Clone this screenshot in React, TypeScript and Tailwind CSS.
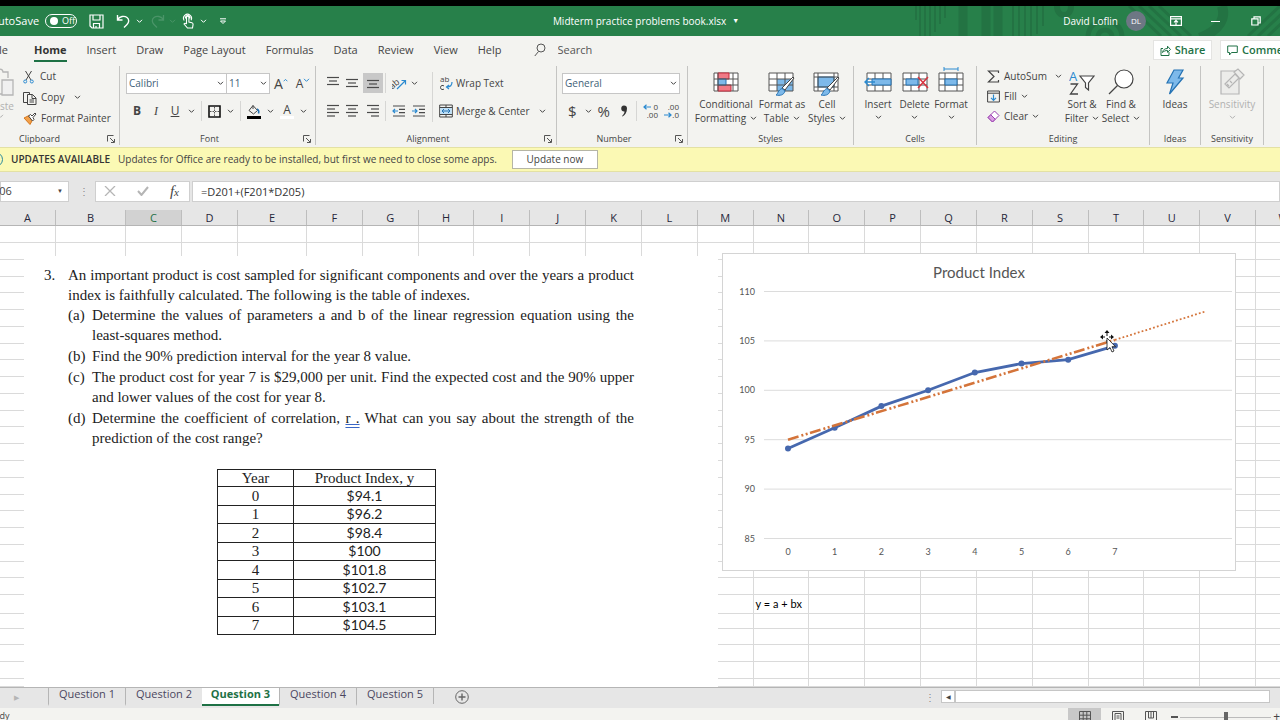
import type { ReactNode } from "react"
import clsx from "clsx"

const tabs = ["Home", "Insert", "Draw", "Page Layout", "Formulas", "Data", "Review", "View", "Help"]
const columns = "ABCDEFGHIJKLMNOPQRSTUVW".split("")
const sheets = ["Question 1", "Question 2", "Question 3", "Question 4", "Question 5"]
const productIndex = [94.1, 96.2, 98.4, 100, 101.8, 102.7, 103.1, 104.5]

// the last column runs past the right edge of the window
const columnGrid =
  "grid w-[calc(100%+32px)] grid-cols-[56px_70px_56px_56px_69px_repeat(17,minmax(0,1fr))_56px]"

/* ---------- small pieces ---------- */

function Chevron({ className }: { className?: string }) {
  return (
    <svg viewBox="0 0 8 6" className={clsx("h-[5px] w-[7px] shrink-0", className)} fill="none" stroke="currentColor" strokeWidth="1.2">
      <path d="M1 1l3 3 3-3" />
    </svg>
  )
}

function Divider() {
  return <span className="ml-1.5 h-5 w-px bg-[#d6d6d4]" />
}

function Group({
  label,
  className,
  inner,
  launcher,
  children,
}: {
  label: string
  className: string
  inner?: string
  launcher?: boolean
  children: ReactNode
}) {
  return (
    <section
      aria-label={label}
      className={clsx("flex shrink-0 flex-col border-r border-[#c4c4c2]", className)}
    >
      <div className={clsx("flex h-[67px] items-start", inner)}>{children}</div>
      <div className="flex h-3 items-center">
        <span className="flex-1 text-center text-[9px] leading-3 whitespace-nowrap">{label}</span>
        {launcher && (
          <button aria-label={`${label} settings`} className="w-4 pl-1">
            <svg viewBox="0 0 8 8" className="size-2" fill="none" stroke="#555" strokeWidth="1">
              <path d="M.5 6.500V.5h6M3 3l4 4M7.500 4v3.500H4" />
            </svg>
          </button>
        )}
      </div>
    </section>
  )
}

function SelectBox({ label, value, className }: { label: string; value: string; className: string }) {
  return (
    <div className={clsx("grid h-[21px] items-center border border-[#c6c6c6] bg-white", className)}>
      <select
        aria-label={label}
        className="col-start-1 row-start-1 h-full w-full appearance-none px-0.5 text-[10px] text-[#3f5f78] outline-none"
      >
        <option>{value}</option>
      </select>
      <Chevron className="pointer-events-none col-start-1 row-start-1 mr-0.5 justify-self-end" />
    </div>
  )
}

function Lines({ widths, align = "start" }: { widths: number[]; align?: "start" | "middle" | "end" }) {
  return (
    <svg viewBox="0 0 14 14" className="size-3.5" stroke="#4a4a4a" strokeWidth="1.2">
      {widths.map((w, i) => {
        const x = align === "start" ? 1 : align === "middle" ? 7 - w / 2 : 13 - w
        return <path key={i} d={`M${x} ${1.5 + i * 3.5}h${w}`} />
      })}
    </svg>
  )
}

function Indent({ flip }: { flip?: boolean }) {
  return (
    <svg viewBox="0 0 14 14" className="size-3.5" fill="none">
      <path d="M1 2h12M7 5.300h6M7 8.600h6M1 12h12" stroke="#4a4a4a" strokeWidth="1.2" />
      <path d={flip ? "M0 7h5M3 5l2 2-2 2" : "M1 7h5M3 5L1 7l2 2"} stroke="#2b8ad0" strokeWidth="1.2" />
    </svg>
  )
}

function Brush() {
  return (
    <g>
      <path d="M26 6L17 18l-3-2L25 5z" fill="#fff" stroke="#444" strokeWidth="1" />
      <path d="M14 16.500l3 2.500c-1 4-5 5-9 4 2-1 2-5 6-6.500z" fill="#7db9ea" stroke="#2472b3" strokeWidth="1" />
    </g>
  )
}

function BigButton({
  icon,
  lines,
  chevron,
  muted,
  className,
}: {
  icon: ReactNode
  lines: string[]
  chevron?: "inline" | "below"
  muted?: boolean
  className?: string
}) {
  return (
    <button className={clsx("flex flex-col items-center pt-0.5 text-[10px] leading-3.5", muted && "text-[#b1b1b1]", className)}>
      <span className="mb-px flex h-7 items-center justify-center">{icon}</span>
      {lines.map((line, i) => (
        <span key={line} className="flex items-center gap-1 whitespace-nowrap">
          {line}
          {chevron === "inline" && i === lines.length - 1 && <Chevron />}
        </span>
      ))}
      {chevron === "below" && <Chevron className="mt-1" />}
    </button>
  )
}

/* ---------- title bar ---------- */

function TitleBar() {
  return (
    <header className="relative flex h-[30px] shrink-0 items-center overflow-hidden bg-[#27804a] text-[11px] text-white">
      <svg viewBox="0 0 366 30" className="absolute right-0 h-[30px] w-[366px]" fill="none" stroke="#237343">
        <path d="M2 0v14M6 0v30M11 0v30M16 0v30M21 0v26M26 0v18M31 0v12" strokeWidth="2" />
        <path d="M49 0v30M72 0v30M84 0v30" strokeWidth="9" />
        <path d="M99 0v30M105 0v30M111 0v30M117 0v30M123 0v28M129 0v20" strokeWidth="2" />
        <path d="M143 0c0 12 14 12 14 0" strokeWidth="6" />
        <circle cx="191" cy="31" r="7" strokeWidth="5" />
        <circle cx="191" cy="31" r="17" strokeWidth="5" />
        <path d="M215 0l32 30M225 0l32 30M235 0l32 30M245 0l32 30" strokeWidth="3" />
        <path d="M308 0c4 12-2 24-22 32" strokeWidth="10" />
        <path d="M334 30l32-30M344 30l32-30M354 30l32-30" strokeWidth="3" />
      </svg>

      <div className="relative flex items-center">
        <label htmlFor="autosave" className="-ml-[9px] w-12">AutoSave</label>
        <button id="autosave" role="switch" aria-checked="false" className="ml-1.5 flex h-3.5 w-8 items-center gap-1 rounded-full border border-white pl-1 text-[9px]">
          <span className="size-2 rounded-full bg-white" />
          Off
        </button>
        <button aria-label="Save" className="ml-3">
          <svg viewBox="0 0 15 15" className="size-[15px]" fill="none" stroke="#fff" strokeWidth="1.2">
            <path d="M1 1h13v13H3l-2-2zM4 1v5h7V1M4.500 14V9.500h6V14M7 14v-2" />
          </svg>
        </button>
        <button aria-label="Undo" className="ml-3 flex items-center gap-1.5">
          <svg viewBox="0 0 14 14" className="size-3.5" fill="none" stroke="#fff" strokeWidth="1.4">
            <path d="M1.500 1v5h5M1.500 6c2-4 7-4.500 9.500-2.500s2 5 0 7L8 13.500" />
          </svg>
          <Chevron />
        </button>
        <button aria-label="Redo" className="ml-2 flex items-center gap-1 text-[#4a9468]">
          <svg viewBox="0 0 14 14" className="size-3.5" fill="none" stroke="currentColor" strokeWidth="1.3">
            <path d="M12.500 1v5h-5M12.500 6c-2-4-7-4.500-9.500-2.500s-2 5 0 7L6 13.500" />
          </svg>
          <Chevron />
        </button>
        <button aria-label="Touch mode" className="ml-1.5 flex items-center gap-1.5">
          <svg viewBox="0 0 12 16" className="h-4 w-3" fill="none" stroke="#fff" strokeWidth="1.1">
            <path d="M4.500 11V4.500a1.200 1.200 0 012.400 0V9l3 .8c1 .3 1.300 1 1.100 2L10.500 15H5.500L2 11c.5-1 1.500-1 2.500 0M2.200 7.500A4 4 0 119 7.200M3.500 5.500a2.300 2.300 0 114.400 0" />
          </svg>
          <Chevron />
        </button>
        <button aria-label="Customize toolbar" className="ml-3">
          <svg viewBox="0 0 8 7" className="h-[7px] w-2" fill="none" stroke="#fff">
            <path d="M1 .8h6M1.500 3L4 5.500 6.500 3z" />
          </svg>
        </button>
      </div>

      <h1 className="absolute inset-x-0 flex items-center justify-center gap-1.5 pl-3 text-[10px]">
        Midterm practice problems book.xlsx
        <span className="text-[7px]">▼</span>
      </h1>

      <div className="relative ml-auto flex items-center">
        <span className="text-[10px]">David Loflin</span>
        <span className="ml-2 flex size-5 items-center justify-center rounded-full bg-[#6d7784] text-[8px]">DL</span>
        <button aria-label="Ribbon display options" className="ml-6">
          <svg viewBox="0 0 12 10" className="h-2.5 w-3" fill="none" stroke="#fff" strokeWidth="1.2">
            <path d="M.6.6h10.800v8.800H.6zM.6 2.800h10.800M6 9V4.500M4 6.300l2-2 2 2" />
          </svg>
        </button>
        <button aria-label="Minimize" className="ml-[29px] flex h-3 w-[9px] items-center">
          <span className="h-px w-full bg-white" />
        </button>
        <button aria-label="Restore" className="mr-[19px] ml-[31px]">
          <svg viewBox="0 0 10 10" className="size-2.5" fill="none" stroke="#fff" strokeWidth="1.2">
            <path d="M.8 2.800h6.200V9H.8zM3 2.500V.8h6.200V7H7.200" />
          </svg>
        </button>
      </div>
    </header>
  )
}

function TabRow() {
  return (
    <nav className="flex h-[30px] shrink-0 items-center overflow-hidden bg-[#f3f3f0] pb-0.5 text-[11px] leading-4">
      <button className="-ml-3 w-5 text-right">File</button>
      <div className="ml-[26px] flex gap-5">
        {tabs.map((tab) => (
          <button
            key={tab}
            className={clsx(
              "border-b-2 pt-1 pb-0.5",
              tab === "Home" ? "border-[#1e7145] font-bold text-[#333]" : "border-transparent"
            )}
          >
            {tab}
          </button>
        ))}
      </div>
      <label className="ml-8 flex items-center gap-3">
        <svg viewBox="0 0 12 14" className="h-3.5 w-3" fill="none" stroke="#555">
          <circle cx="7" cy="5" r="4" />
          <path d="M4.500 8.500L.8 13" />
        </svg>
        <input aria-label="Search" className="w-24 outline-none placeholder:text-[#555]" placeholder="Search" />
      </label>
      <button className="ml-auto flex h-5 w-[59px] items-center justify-center gap-1 border border-[#e4e4e2] bg-white font-semibold text-[#1e7145]">
        <svg viewBox="0 0 11 11" className="size-[11px]" fill="none" stroke="#1e7145">
          <path d="M3 3.500H1v7h8V7M2.500 7.500c.5-3 2.500-4 5-4V1.200L10.500 4.500 7.500 7.300V5.500c-2 0-3.500.5-5 2z" />
        </svg>
        Share
      </button>
      <button className="-mr-7 ml-2 flex h-5 w-[88px] items-center gap-1 border border-[#e4e4e2] bg-white pl-1.5 font-semibold text-[#1e7145]">
        <svg viewBox="0 0 11 11" className="size-[11px]" fill="none" stroke="#1e7145">
          <path d="M.7 1h9.600v6.500H4.500L2.500 10V7.500H.7z" />
        </svg>
        Comments
      </button>
    </nav>
  )
}

/* ---------- ribbon ---------- */

function ClipboardGroup() {
  return (
    <Group label="Clipboard" launcher className="-ml-6 w-36">
      <button aria-label="Paste" className="flex w-[38px] flex-col items-end pt-0.5 text-[10px] leading-4 text-[#b1b1b1]">
        <svg viewBox="0 0 26 30" className="h-[30px] w-[26px]" fill="none" stroke="#b5b5b5" strokeWidth="1.300">
          <path d="M14 26H2V4h5c0-4 8-4 8 0h5v6" />
          <path d="M14 12h11v15H14z" fill="#f0f0f0" />
        </svg>
        Paste
        <Chevron className="mr-2.5" />
      </button>
      <div className="flex flex-col pl-[9px] text-[10px]">
        <button className="flex h-[21px] items-center gap-1.5">
          <svg viewBox="0 0 11 14" className="h-3.5 w-[11px]" fill="none" stroke="#444">
            <path d="M2.500 1l5.500 9M8.500 1L3 10" />
            <circle cx="2.200" cy="11.500" r="1.500" stroke="#2b8ad0" />
            <circle cx="8.800" cy="11.500" r="1.500" stroke="#2b8ad0" />
          </svg>
          Cut
        </button>
        <button className="flex h-[21px] items-center gap-1">
          <svg viewBox="0 0 14 14" className="size-3.5" fill="none" stroke="#444">
            <path d="M4.500 11.500H.5V1.500h6v2M4.500 3.500h5l3.500 3.500v6.500H4.500zM9 3.500v4h4M6.500 9h4.500M6.500 11h4.500" />
          </svg>
          Copy
          <Chevron className="ml-1.5" />
        </button>
        <button className="flex h-[21px] items-center gap-1 whitespace-nowrap">
          <svg viewBox="0 0 14 14" className="size-3.5" fill="none" stroke="#444">
            <path d="M1 6l5-2.500L9.500 8 7 12.500z" fill="#f2a04a" stroke="#d5761c" />
            <path d="M5.500 4l2-1.500 1.500 1.500 3-3 1 1-3 3.500L11 7.500 9.500 9z" fill="#fff" />
          </svg>
          Format Painter
        </button>
      </div>
    </Group>
  )
}

function FontGroup() {
  return (
    <Group label="Font" launcher className="w-[196px]" inner="pl-1.5">
      <div className="flex flex-col pt-[7px]">
        <div className="flex items-center">
          <SelectBox label="Font name" value="Calibri" className="w-[101px]" />
          <SelectBox label="Font size" value="11" className="-ml-px w-11" />
          <button aria-label="Increase font size" className="ml-1 flex text-[14px] leading-4">
            A
            <svg viewBox="0 0 8 6" className="mt-0.5 h-1 w-[5px]" fill="none" stroke="#2b8ad0" strokeWidth="1.500">
              <path d="M1 5l3-3 3 3" />
            </svg>
          </button>
          <button aria-label="Decrease font size" className="ml-2 flex text-[12px] leading-4">
            A<Chevron className="mt-0.5 h-1 w-[5px] text-[#2b8ad0]" />
          </button>
        </div>
        <div className="mt-[7px] flex h-5 items-center pl-1.5 text-[12px]">
          <button aria-label="Bold" className="w-2.5 font-bold">B</button>
          <button aria-label="Italic" className="ml-2.5 w-2 font-['Liberation_Serif',serif] italic">I</button>
          <button aria-label="Underline" className="ml-2.5 w-2.5 underline">U</button>
          <Chevron className="ml-2" />
          <Divider />
          <button aria-label="Borders" className="ml-1.5 flex items-center gap-1.5">
            <svg viewBox="0 0 13 13" className="size-[13px]" fill="none">
              <path d="M1 1h11v11H1z" stroke="#111" strokeWidth="1.600" />
              <path d="M6.500 2v9M2 6.500h9" stroke="#555" strokeDasharray="1.500 1" />
            </svg>
            <Chevron />
          </button>
          <Divider />
          <button aria-label="Fill color" className="ml-1.5 flex items-center gap-1.5">
            <svg viewBox="0 0 14 15" className="h-[15px] w-3.5" fill="none">
              <path d="M6 1.500l4.500 5-4 3.500L2 6.500zM6 1.500V5" stroke="#444" />
              <path d="M10 5c2 1 2 3 1.500 4.500" stroke="#2472b3" strokeWidth="1.500" />
              <path d="M0 12h14v3H0z" fill="#000" />
            </svg>
            <Chevron />
          </button>
          <button aria-label="Font color" className="ml-1.5 flex items-center gap-1.5">
            <span className="w-3.5 border-b-3 border-white text-center leading-3">A</span>
            <Chevron />
          </button>
        </div>
      </div>
    </Group>
  )
}

function AlignmentGroup() {
  return (
    <Group label="Alignment" launcher className="w-[241px]" inner="pl-2">
      <div className="flex flex-col gap-1.5 pt-1.5">
        <div className="flex h-[22px] items-center">
          <button aria-label="Top align" className="w-[19px] pl-0.5"><Lines widths={[12, 8, 12]} align="middle" /></button>
          <button aria-label="Middle align" className="w-5 pt-1 pl-0.5"><Lines widths={[12, 8, 12]} align="middle" /></button>
          <button aria-label="Bottom align" className="flex size-5 items-end justify-center bg-[#c8c8c8]"><Lines widths={[12, 8, 12]} align="middle" /></button>
          <span className="ml-0.5 h-5 w-px bg-[#d6d6d4]" />
          <button aria-label="Orientation" className="ml-1.5 flex items-center gap-1">
            <svg viewBox="0 0 15 14" className="h-3.5 w-[15px]">
              <text x="-3" y="9" fontSize="9" fill="#444" transform="rotate(-40 5 7)">ab</text>
              <path d="M5 13l8-8M9.500 4.500h4v4" fill="none" stroke="#2b8ad0" strokeWidth="1.200" />
            </svg>
            <Chevron />
          </button>
        </div>
        <div className="flex h-[22px] items-center">
          <button aria-label="Align left" className="w-[19px] pl-0.5"><Lines widths={[12, 8, 12, 8]} /></button>
          <button aria-label="Center" className="w-5 pl-0.5"><Lines widths={[12, 8, 12, 8]} align="middle" /></button>
          <button aria-label="Align right" className="w-5 pl-[3px]"><Lines widths={[12, 8, 12, 8]} align="end" /></button>
          <span className="ml-0.5 h-5 w-px bg-[#d6d6d4]" />
          <button aria-label="Decrease indent" className="ml-1.5"><Indent /></button>
          <button aria-label="Increase indent" className="ml-1.5"><Indent flip /></button>
        </div>
      </div>
      <div className="mt-1.5 ml-1.5 flex flex-col gap-1.5 border-l border-[#d6d6d4] pl-1.5 text-[10px]">
        <button className="flex h-[22px] items-center gap-0.5">
          <svg viewBox="0 0 15 16" className="h-4 w-[15px]">
            <text x="1" y="7" fontSize="8" fill="#444">ab</text>
            <path d="M5 11c-1-1-3.500-.8-3.500 1.500S4 15 5 14" fill="none" stroke="#444" />
            <path d="M13 7c0 4-2 5-5 5M10 10l-2.500 2 2.500 2" fill="none" stroke="#2b8ad0" strokeWidth="1.200" />
          </svg>
          Wrap Text
        </button>
        <button className="flex h-[22px] items-center gap-[3px] whitespace-nowrap">
          <svg viewBox="0 0 14 14" className="size-3.5" fill="none">
            <path d="M.7 1h12.600v12H.7zM.7 3.500h12.600M.7 10.500h12.600M7 1v2.500M7 10.500V13" stroke="#444" />
            <path d="M1.200 4h11.600v6H1.200z" fill="#bfe0f7" />
            <path d="M3 7h8M5 5L3 7l2 2M9 5l2 2-2 2" stroke="#2472b3" />
          </svg>
          Merge &amp; Center
          <Chevron className="ml-1.5" />
        </button>
      </div>
    </Group>
  )
}

function NumberGroup() {
  return (
    <Group label="Number" launcher className="w-[131px]" inner="pl-[5px]">
      <div className="flex flex-col pt-[7px]">
        <SelectBox label="Number format" value="General" className="w-[118px]" />
        <div className="mt-[7px] flex h-5 items-center pl-1.5 text-[15px]">
          <button aria-label="Accounting format">$</button>
          <Chevron className="ml-2" />
          <button aria-label="Percent style" className="ml-1.5">%</button>
          <button aria-label="Comma style" className="ml-2.5 w-2">
            <svg viewBox="0 0 8 12" className="h-3 w-2" fill="#333">
              <path d="M4 .5a3 3 0 013 3C7 7.500 5 10 2.500 11.500L2 11c1.500-1.300 2.500-3 2.500-4.500A3 3 0 114 .5z" />
            </svg>
          </button>
          <span className="ml-2 h-5 w-px bg-[#d6d6d4]" />
          <button aria-label="Increase decimal" className="ml-1.5 grid w-[15px] text-right text-[8px] leading-2">
            <span className="flex items-center justify-between">
              <svg viewBox="0 0 8 6" className="h-1.5 w-2" fill="none" stroke="#2b8ad0" strokeWidth="1.200">
                <path d="M1 3h7M3.500.8L1 3l2.500 2.200" />
              </svg>
              0
            </span>
            <span>.00</span>
          </button>
          <button aria-label="Decrease decimal" className="ml-1.5 grid w-[15px] text-right text-[8px] leading-2">
            <span>.00</span>
            <span className="flex items-center justify-between">
              <svg viewBox="0 0 8 6" className="h-1.5 w-2" fill="none" stroke="#2b8ad0" strokeWidth="1.200">
                <path d="M0 3h7M4.500.8L7 3 4.500 5.200" />
              </svg>
              .0
            </span>
          </button>
        </div>
      </div>
    </Group>
  )
}

function StylesGroup() {
  return (
    <Group label="Styles" className="w-[166px]" inner="pl-2">
      <BigButton
        className="w-[60px]"
        lines={["Conditional", "Formatting"]}
        chevron="inline"
        icon={
          <svg viewBox="0 0 26 20" className="h-5 w-[26px]" fill="none">
            <path d="M1 1h24v18H1z" fill="#fff" stroke="#555" />
            <path d="M5 1h11v6H5zM5 13h13v6H5z" fill="#f07a86" stroke="#c8283a" />
            <path d="M5 7h8v6H5z" fill="#7db9ea" stroke="#2472b3" />
            <path d="M1 7h24M1 13h24M5 1v18M20 1v18" stroke="#555" />
          </svg>
        }
      />
      <BigButton
        className="w-[52px]"
        lines={["Format as", "Table"]}
        chevron="inline"
        icon={
          <svg viewBox="0 0 28 24" className="mt-1 h-6 w-7" fill="none">
            <path d="M1 1h24v18H1z" fill="#fff" />
            <path d="M9 7h16v12H9z" fill="#7db9ea" />
            <path d="M1 1h24v18H1zM1 7h24M1 13h24M9 1v18M17 1v18" stroke="#555" />
            <Brush />
          </svg>
        }
      />
      <BigButton
        className="w-[38px]"
        lines={["Cell", "Styles"]}
        chevron="inline"
        icon={
          <svg viewBox="0 0 28 24" className="mt-1 h-6 w-7" fill="none">
            <path d="M1 1h24v18H1z" fill="#fff" />
            <path d="M5 5h16v10H5z" fill="#7db9ea" stroke="#2472b3" />
            <path d="M1 1h24v18H1zM1 5h24M1 15h24M5 1v18M21 1v18" stroke="#555" />
            <Brush />
          </svg>
        }
      />
    </Group>
  )
}

function CellsGroup() {
  return (
    <Group label="Cells" className="w-[123px]" inner="pl-1.5">
      <BigButton
        className="w-9"
        lines={["Insert"]}
        chevron="below"
        icon={
          <svg viewBox="0 0 28 20" className="h-5 w-7" fill="none">
            <path d="M3 1h24v18H3z" fill="#fff" stroke="#555" />
            <path d="M3 7h24M3 13h24M11 1v18M19 1v18" stroke="#555" />
            <path d="M8 7h19v6H8z" fill="#7db9ea" stroke="#2472b3" />
            <path d="M1 10h10M5 6l-4 4 4 4" stroke="#2b8ad0" strokeWidth="1.400" />
          </svg>
        }
      />
      <BigButton
        className="w-[37px]"
        lines={["Delete"]}
        chevron="below"
        icon={
          <svg viewBox="0 0 28 20" className="h-5 w-7" fill="none">
            <path d="M2 1h24v18H2z" fill="#fff" stroke="#555" />
            <path d="M2 7h24M2 13h24M10 1v18M18 1v18" stroke="#555" />
            <path d="M5 7h12v6H5z" fill="#7db9ea" stroke="#2472b3" />
            <path d="M17 5l10 11M27 5L17 16" stroke="#d8333f" strokeWidth="1.500" />
          </svg>
        }
      />
      <BigButton
        className="w-9"
        lines={["Format"]}
        chevron="below"
        icon={
          <svg viewBox="0 0 26 26" className="mb-1 h-[26px] w-[26px]" fill="none">
            <path d="M6 2h14M6 0v4M20 0v4" stroke="#2b8ad0" />
            <path d="M1 6h24v18H1z" fill="#fff" />
            <path d="M1 6h24v18H1zM1 12h24M1 18h24M7 6v18M19 6v18" stroke="#555" />
            <path d="M7 12h12v6H7z" fill="#7db9ea" stroke="#2472b3" />
          </svg>
        }
      />
    </Group>
  )
}

function EditingGroup() {
  return (
    <Group label="Editing" className="w-[173px]" inner="pl-2.5">
      <div className="flex w-[75px] flex-col text-[10px]">
        <button className="flex h-5 items-center gap-1">
          <svg viewBox="0 0 13 13" className="size-[13px]" fill="none" stroke="#444" strokeWidth="1.200">
            <path d="M11.500 3V1H1.500l5.500 5.500L1.500 12h10v-2" />
          </svg>
          AutoSum
          <Chevron className="ml-auto" />
        </button>
        <button className="flex h-5 items-center gap-1">
          <svg viewBox="0 0 13 13" className="size-[13px]" fill="none" stroke="#444">
            <path d="M.6 1h11.800v11H.6zM.6 3.200h11.800" />
            <path d="M6.500 4.500V10M4 7.800L6.500 10.300 9 7.800" stroke="#2b8ad0" strokeWidth="1.200" />
          </svg>
          Fill <Chevron />
        </button>
        <button className="flex h-5 items-center gap-1">
          <svg viewBox="0 0 13 13" className="size-[13px]" fill="#fff" stroke="#9b3fb0">
            <path d="M7.500 1L12 5.500 5.500 12 1 7.500z" />
            <path d="M3.800 4.800L8.200 9.200 5.500 12 1 7.500z" fill="#d9a0e2" />
          </svg>
          Clear <Chevron />
        </button>
      </div>
      <BigButton
        className="w-[40px]"
        lines={["Sort &", "Filter"]}
        chevron="inline"
        icon={
          <svg viewBox="0 0 26 28" className="h-7 w-[26px]" fill="none">
            <text x="0" y="13" fontSize="13" fill="#2b8ad0">A</text>
            <path d="M1.500 16h7L1.500 26h7.500" stroke="#444" strokeWidth="1.300" />
            <path d="M11 8h14l-5.500 7v7l-3-2.500V15z" fill="#fff" stroke="#444" strokeWidth="1.200" />
          </svg>
        }
      />
      <BigButton
        className="w-[38px]"
        lines={["Find &", "Select"]}
        chevron="inline"
        icon={
          <svg viewBox="0 0 26 28" className="h-7 w-[26px]" fill="none" stroke="#444" strokeWidth="1.200">
            <circle cx="16" cy="11" r="9" fill="#fff" />
            <path d="M9.500 17.500L1 26" />
          </svg>
        }
      />
    </Group>
  )
}

function Ribbon() {
  return (
    <div className="flex h-[81px] shrink-0 overflow-hidden bg-[#f3f3f0] pb-0.5">
      <ClipboardGroup />
      <FontGroup />
      <AlignmentGroup />
      <NumberGroup />
      <StylesGroup />
      <CellsGroup />
      <EditingGroup />
      <Group label="Ideas" className="w-[51px]">
        <BigButton
          className="w-full"
          lines={["Ideas"]}
          icon={
            <svg viewBox="0 0 20 26" className="h-[26px] w-5" fill="#7db9ea" stroke="#2472b3" strokeWidth="1.200">
              <path d="M9 1h9l-4.500 8H18L4.500 25 8 14H2z" />
            </svg>
          }
        />
      </Group>
      <Group label="Sensitivity" className="w-[63px]">
        <BigButton
          className="w-full"
          muted
          chevron="below"
          lines={["Sensitivity"]}
          icon={
            <svg viewBox="0 0 26 28" className="h-7 w-[26px]" fill="#ececea" stroke="#b5b5b5" strokeWidth="1.200">
              <path d="M2 3h18v23H2z" />
              <path d="M6 16l10-10 4 4-10 10zM15 4l4-3 6 6-4 4zM8 16l2 2M11 13l2 2" />
            </svg>
          }
        />
      </Group>
    </div>
  )
}

/* ---------- message and formula bars ---------- */

function UpdateBar() {
  return (
    <div className="flex h-[25px] shrink-0 items-center overflow-hidden border-y border-[#e3e1a4] bg-[#fbf9b4] text-[10px] text-[#444]">
      <span className="-ml-3 size-[15px] rounded-full border border-[#2b8a9d]" />
      <span className="ml-2 font-semibold text-[#333]">UPDATES AVAILABLE</span>
      <span className="ml-2">Updates for Office are ready to be installed, but first we need to close some apps.</span>
      <button className="ml-[15px] h-[19px] w-[86px] border border-[#b5b5a5] bg-white">Update now</button>
    </div>
  )
}

function FormulaBar() {
  return (
    <div className="flex h-[38px] shrink-0 items-center overflow-hidden bg-[#e6e6e6] text-[11px]">
      <label className="flex h-[21px] w-[69px] items-center border border-[#cfcfcf] bg-white">
        <input aria-label="Name box" defaultValue="D206" className="-ml-4 w-[72px] outline-none" />
        <span className="text-[6px]">▼</span>
      </label>
      <span className="ml-2.5 w-1 text-[10px] leading-3 text-[#888]">⋮</span>
      <div className="ml-3 flex h-[21px] w-[95px] items-center justify-between border border-[#cfcfcf] bg-white pr-2.5 pl-2">
        <button aria-label="Cancel">
          <svg viewBox="0 0 12 10" className="h-2.5 w-3" stroke="#b5b5b5" strokeWidth="1.300"><path d="M1 0l10 10M11 0L1 10" /></svg>
        </button>
        <button aria-label="Enter">
          <svg viewBox="0 0 12 10" className="h-2.5 w-3" fill="none" stroke="#b5b5b5" strokeWidth="2"><path d="M1 5l3.500 4L11 1" /></svg>
        </button>
        <button aria-label="Insert function" className="font-['Liberation_Serif',serif] text-[15px] leading-4 italic">
          f<span className="text-[11px]">x</span>
        </button>
      </div>
      <input
        aria-label="Formula"
        defaultValue="=D201+(F201*D205)"
        className="ml-0.5 h-[21px] min-w-0 flex-1 border border-[#cfcfcf] bg-white px-2 text-[#333] outline-none"
      />
    </div>
  )
}

/* ---------- worksheet ---------- */

function ColumnHeaders() {
  return (
    <div className="shrink-0 overflow-hidden border-b border-[#b5b5b5] bg-[#e6e6e6]">
      <div role="row" className={clsx(columnGrid, "h-[15px] text-[11px] text-[#26263a]")}>
        {columns.map((c) => (
          <div
            key={c}
            role="columnheader"
            className={clsx(
              "border-r border-[#bdbdbd] text-center leading-4",
              c === "C" && "border-b-2 border-b-[#1e7145] bg-[#d2d2d2] text-[#1e7145]"
            )}
          >
            {c}
          </div>
        ))}
      </div>
    </div>
  )
}

function Problem() {
  const full = "block [text-align-last:justify]"
  return (
    <article className="absolute top-[30px] bottom-0 left-6 w-[694px] bg-white pt-[9px] pr-[84px] pl-5 font-['Liberation_Serif',serif] text-[15px] leading-5 text-[#222]">
      <div className="flex">
        <span className="w-6 shrink-0">3.</span>
        <div className="flex-1 whitespace-nowrap">
          <p>
            <span className={full}>An important product is cost sampled for significant components and over the years a product</span>
            <span className="block">index is faithfully calculated. The following is the table of indexes.</span>
          </p>
          <ol className="flex flex-col gap-px">
            <li className="flex">
              <span className="w-6 shrink-0">(a)</span>
              <p className="flex-1">
                <span className={full}>Determine the values of parameters a and b of the linear regression equation using the</span>
                <span className="block">least-squares method.</span>
              </p>
            </li>
            <li className="flex">
              <span className="w-6 shrink-0">(b)</span>
              <p>Find the 90% prediction interval for the year 8 value.</p>
            </li>
            <li className="flex">
              <span className="w-6 shrink-0">(c)</span>
              <p className="flex-1">
                <span className={full}>The product cost for year 7 is $29,000 per unit. Find the expected cost and the 90% upper</span>
                <span className="block">and lower values of the cost for year 8.</span>
              </p>
            </li>
            <li className="flex">
              <span className="w-6 shrink-0">(d)</span>
              <p className="flex-1">
                <span className={full}>
                  Determine the coefficient of correlation,{" "}
                  <span className="underline decoration-[#3a66c4] decoration-double">r&nbsp;.</span> What can you say about the strength of the
                </span>
                <span className="block">prediction of the cost range?</span>
              </p>
            </li>
          </ol>
        </div>
      </div>

      <table className="mt-[21px] ml-[173px] h-[166px] w-[219px] border-collapse text-center leading-4 [&_td]:border [&_td]:border-[#222] [&_td]:p-0 [&_th]:border [&_th]:border-[#222] [&_th]:p-0 [&_th]:font-normal">
        <thead>
          <tr>
            <th className="w-[76px]">Year</th>
            <th>Product Index, y</th>
          </tr>
        </thead>
        <tbody>
          {productIndex.map((value, year) => (
            <tr key={year}>
              <td>{year}</td>
              <td className="font-['Lato',sans-serif] text-[14px]">${value}</td>
            </tr>
          ))}
        </tbody>
      </table>
    </article>
  )
}

function IndexChart() {
  const x = (year: number) => 65 + year * 46.7
  const y = (value: number) => 284.5 - (value - 85) * 9.88
  return (
    <figure className="absolute top-[27px] left-[722px] w-[514px] border border-[#d4d4d4] bg-white">
      <svg viewBox="0 0 512 316" className="block w-full font-['Lato',sans-serif]" fill="#555">
        <text x="256" y="24" textAnchor="middle" fontSize="15">Product Index</text>
        {[110, 105, 100, 95, 90, 85].map((v) => (
          <g key={v}>
            <path d={`M41 ${y(v)}H509`} stroke="#dcdcdc" />
            <text x="32" y={y(v) + 3} textAnchor="end" fontSize="9">{v}</text>
          </g>
        ))}
        {productIndex.map((_, year) => (
          <text key={year} x={x(year)} y="301" textAnchor="middle" fontSize="9">{year}</text>
        ))}
        <polyline points={productIndex.map((v, i) => `${x(i)},${y(v)}`).join(" ")} fill="none" stroke="#4668ae" strokeWidth="2.800" />
        {productIndex.map((v, i) => (
          <circle key={i} cx={x(i)} cy={y(v)} r="3" fill="#4668ae" />
        ))}
        <path
          d={`M${x(0)} ${y(95)}L${x(7)} ${y(105.1)}`}
          stroke="#d4743a"
          strokeWidth="2.600"
          strokeDasharray="11 3 2 2.500 2 2.500"
        />
        <path d={`M${x(7)} ${y(105.1)}L${x(8.95)} ${y(108)}`} stroke="#d4743a" strokeWidth="1.800" strokeDasharray="1.800 2.200" />
        {/* move cursor */}
        <path d="M384 79v10M379 83h10" stroke="#111" strokeDasharray="3 4" />
        <path d="M384 76l2.500 3h-5zM377 83l3-2.500v5zM391 83l-3-2.500v5z" fill="#111" />
        <path d="M384 84v12l3-2.500 2 4.500 2-1-2-4.300h3.500z" fill="#fff" stroke="#111" strokeWidth=".8" />
      </svg>
    </figure>
  )
}

function Worksheet() {
  return (
    <main className="relative min-h-0 flex-1 overflow-hidden bg-white">
      <div role="grid" aria-label="Question 3" className="grid h-full grid-rows-[17px_repeat(26,minmax(0,1fr))_8px]">
        {Array.from({ length: 28 }, (_, row) => (
          <div key={row} role="row" className={columnGrid}>
            {columns.map((c) => (
              <div key={c} role="gridcell" className="border-r border-b border-[#dadada] px-0.5 font-['Lato',sans-serif] text-[11px] leading-[18px] whitespace-nowrap text-black">
                {row === 22 && c === "N" && "y = a + bx"}
              </div>
            ))}
          </div>
        ))}
      </div>
      <Problem />
      <IndexChart />
    </main>
  )
}

function SheetTabs() {
  return (
    <div className="flex h-[21px] shrink-0 items-start border-t border-[#b5b5b5] bg-[#e6e6e6] text-[11px] leading-3">
      <button aria-label="Next sheet" className="w-12 pt-1 pl-3.5 text-left text-[7px] text-[#b5b5b5]">▶</button>
      <div className="flex">
        {sheets.map((sheet) => (
          <button
            key={sheet}
            className={clsx(
              "h-[18px] w-[77px] border-b-2 pb-1",
              sheet === "Question 3"
                ? "border-b-[#1e7145] bg-white font-bold text-[#1e7145]"
                : "border-l border-b-transparent border-l-[#b5b5b5] text-[#4b4660]"
            )}
          >
            {sheet}
          </button>
        ))}
        <span className="h-4 w-px bg-[#b5b5b5]" />
      </div>
      <button aria-label="New sheet" className="mt-0.5 ml-[21px]">
        <svg viewBox="0 0 14 14" className="size-3.5" fill="none" stroke="#666">
          <circle cx="7" cy="7" r="6.300" />
          <path d="M7 3.500v7M3.500 7h7" strokeWidth="1.400" />
        </svg>
      </button>
      <div className="mt-0.5 mr-2.5 ml-auto flex items-center">
        <span className="text-[10px] leading-3 text-[#888]">⋮</span>
        <button aria-label="Scroll left" className="ml-1.5 h-[13px] w-[14px] border border-[#c6c6c6] bg-white text-[6px] leading-3">◀</button>
        <div className="h-[13px] w-[315px] border border-[#c6c6c6] bg-white" />
      </div>
    </div>
  )
}

function StatusBar() {
  return (
    <footer className="flex h-3 shrink-0 items-start overflow-hidden bg-[#f3f3f0] text-[9px] leading-4">
      <span className="-ml-4">Ready</span>
      <div className="ml-auto flex items-start">
        <button aria-label="Normal view" className="flex h-3 w-[33px] justify-center bg-[#c8c8c8] pt-[3px]">
          <svg viewBox="0 0 12 12" className="size-3" fill="none" stroke="#555"><path d="M.5.5h11v11H.5zM4.200.5v11M7.800.5v11M.5 4.200h11M.5 7.800h11" /></svg>
        </button>
        <button aria-label="Page layout view" className="flex w-[33px] justify-center pt-[3px]">
          <svg viewBox="0 0 12 12" className="size-3" fill="none" stroke="#555"><path d="M.5.5h11v11H.5zM3 2.500h6v9H3zM4.500 5h3M4.500 7h3" /></svg>
        </button>
        <button aria-label="Page break view" className="flex w-[33px] justify-center pt-[3px]">
          <svg viewBox="0 0 12 12" className="size-3" fill="none" stroke="#555"><path d="M.5 12V.5h11V12M3.500.5V7h5V.5M6 .5V7" /></svg>
        </button>
        <div className="ml-1 flex h-3 items-center gap-0.5 pt-1.5">
          <button aria-label="Zoom out" className="h-0.5 w-[7px] bg-[#555]" />
          <input
            type="range"
            aria-label="Zoom"
            defaultValue={50}
            className="h-px w-[91px] appearance-none bg-[#bbb] [&::-webkit-slider-thumb]:h-2.5 [&::-webkit-slider-thumb]:w-1 [&::-webkit-slider-thumb]:appearance-none [&::-webkit-slider-thumb]:bg-[#666]"
          />
          <button aria-label="Zoom in" className="text-[12px] leading-2">+</button>
        </div>
      </div>
    </footer>
  )
}

export default function App() {
  return (
    <div className="flex h-screen flex-col overflow-hidden bg-white font-['Open_Sans','Noto_Sans',sans-serif] text-[#444]">
      <div className="h-1.5 shrink-0 bg-black" />
      <TitleBar />
      <TabRow />
      <Ribbon />
      <UpdateBar />
      <FormulaBar />
      <ColumnHeaders />
      <Worksheet />
      <SheetTabs />
      <StatusBar />
    </div>
  )
}
